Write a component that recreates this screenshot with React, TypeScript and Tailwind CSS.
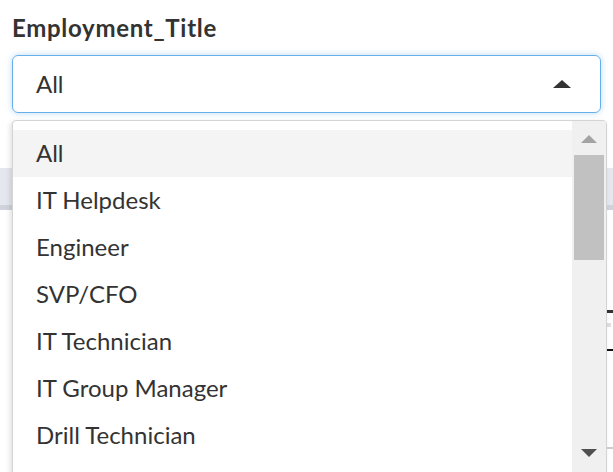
import React from 'react';

const options = [
  'All',
  'IT Helpdesk',
  'Engineer',
  'SVP/CFO',
  'IT Technician',
  'IT Group Manager',
  'Drill Technician',
  'Production Engineer',
];

export default function App() {
  return (
    <div
      className="relative h-[472px] w-[613px] overflow-hidden bg-white text-[#333]"
      style={{ fontFamily: '"Source Sans Pro", Lato, "Noto Sans", sans-serif' }}
    >
      {/* filter label + select */}
      <div className="px-[12px] pt-[14px]">
        <label className="block h-[28px] text-[24px] font-bold leading-[28px] tracking-[0.7px] text-[#333]">
          Employment_Title
        </label>
        <div className="mt-[13px] flex h-[58px] items-center justify-between rounded-[6px] border-[1.5px] border-[#66afe9] pl-[23px] pr-[29px] shadow-[0_0_6px_rgba(102,175,233,0.45)]">
          <span className="text-[24px] leading-none">All</span>
          <span className="h-0 w-0 border-x-[9px] border-b-[8px] border-x-transparent border-b-[#333]" />
        </div>
      </div>

      {/* page content behind the dropdown */}
      <div className="mt-[55px] h-[42px] border-b-[5px] border-[#cfd3dc] bg-[#e4e7ed]" />
      <div className="ml-auto mt-[100px] flex w-[6px] flex-col gap-[10px]">
        <div className="h-[3px] w-[6px] bg-[#333]" />
        <div className="h-[4px] w-[4px] bg-[#ddd]" />
        <div className="mt-[12px] h-[2px] w-[6px] bg-[#111]" />
        <div className="mt-[86px] h-[2px] w-[6px] bg-[#ccc]" />
      </div>

      {/* open dropdown menu */}
      <div className="absolute left-[12px] top-[120px] flex h-[400px] w-[595px] rounded-t-[4px] border border-[#d4d4d4] bg-white shadow-[-2px_2px_5px_rgba(0,0,0,0.12)]">
        <ul className="flex-1 pt-[9px]">
          {options.map((o, i) => (
            <li
              key={o}
              className={`flex h-[47px] items-center pb-[2px] pl-[23px] text-[24px] leading-none text-[#333] ${
                i === 0 ? 'bg-[#f4f4f4]' : ''
              }`}
            >
              {o}
            </li>
          ))}
        </ul>
        <div className="flex w-[34px] flex-col items-center bg-[#f0f0f0] pt-[14px]">
          <span className="h-0 w-0 border-x-[8px] border-b-[8px] border-x-transparent border-b-[#a3a3a3]" />
          <div className="mt-[12px] h-[105px] w-[30px] bg-[#c1c1c1]" />
          <div className="flex-1" />
          <span className="mb-[62px] h-0 w-0 border-x-[8px] border-t-[8px] border-x-transparent border-t-[#505050]" />
        </div>
      </div>
    </div>
  );
}
